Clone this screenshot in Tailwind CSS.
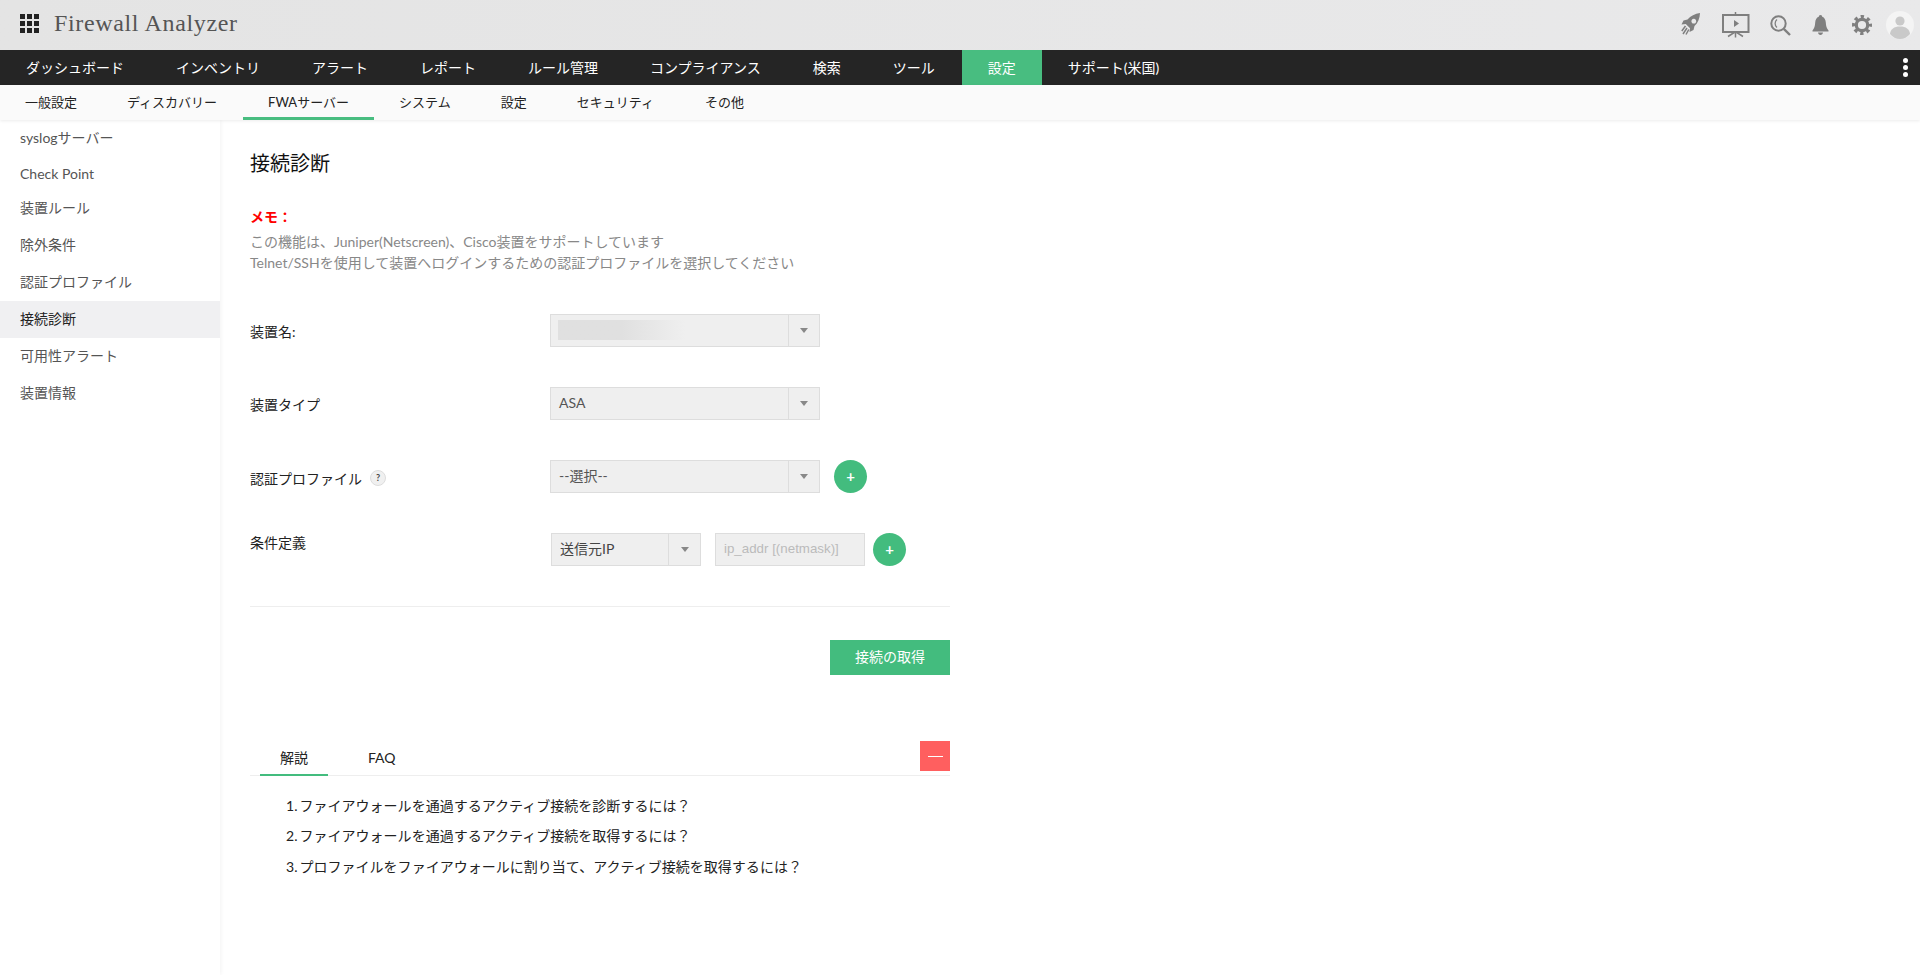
<!DOCTYPE html>
<html lang="ja">
<head>
    <meta charset="UTF-8">
    <meta name="viewport" content="width=device-width, initial-scale=1.0">
    <title>Firewall Analyzer</title>
    <script src="https://cdn.jsdelivr.net/npm/@tailwindcss/browser@4"></script>
</head>
<body class="h-[975px] overflow-hidden flex flex-col bg-white text-[14px] text-[#222] font-['Lato','Noto_Sans_CJK_JP',sans-serif]">

    <!-- Top header -->
    <header class="h-[50px] shrink-0 flex items-center bg-linear-to-r from-[#e4e4e4] to-[#e9e9ea]">
        <div class="ml-5 mb-[4px] grid grid-cols-3 gap-[2px]">
            <span class="w-[5px] h-[5px] bg-[#222]"></span><span class="w-[5px] h-[5px] bg-[#222]"></span><span class="w-[5px] h-[5px] bg-[#222]"></span>
            <span class="w-[5px] h-[5px] bg-[#222]"></span><span class="w-[5px] h-[5px] bg-[#222]"></span><span class="w-[5px] h-[5px] bg-[#222]"></span>
            <span class="w-[5px] h-[5px] bg-[#222]"></span><span class="w-[5px] h-[5px] bg-[#222]"></span><span class="w-[5px] h-[5px] bg-[#222]"></span>
        </div>
        <div class="ml-[15px] mb-[4px] text-[24px] tracking-[0.65px] text-[#555] font-['Liberation_Serif',serif]">Firewall Analyzer</div>

        <div class="ml-auto flex items-center">
            <!-- rocket -->
            <svg class="w-5 h-[22px] mb-[2px]" viewBox="0 0 20 22" fill="#7f7f7f">
                <path fill-rule="evenodd" d="M19 0C14 .8 9.5 2.8 6.5 6.5L2.5 7.5 .5 11.5 4.8 11 9 15.2 8.5 19 12.5 17 13.5 13C17 10 18.8 5 19 0ZM12.8 5.8a2.4 2.4 0 1 0 .01 0Z"/>
                <path d="M4.5 13L.8 18M6 15L2 21M7.8 16.5L5 21.5" stroke="#7f7f7f" stroke-width="1.5" fill="none"/>
            </svg>
            <!-- presentation -->
            <svg class="ml-[21px] w-[28px] h-[26px] mb-[1px]" viewBox="0 0 28 26" fill="none" stroke="#7f7f7f" stroke-width="2">
                <rect x="1" y="3" width="25.5" height="17"/>
                <path d="M13.5 0V3M13.5 20V25.5M13 20L6 24.5M14 20L21 24.5" stroke-width="1.5"/>
                <path d="M12 8L17 11.5 12 15Z" fill="#7f7f7f" stroke="none"/>
            </svg>
            <!-- search -->
            <svg class="ml-[20px] w-[21px] h-[21px]" viewBox="0 0 21 21" fill="none" stroke="#7f7f7f">
                <circle cx="8.5" cy="8.5" r="7.2" stroke-width="2"/>
                <path d="M13.8 13.8L20 20" stroke-width="2.4"/>
                <path d="M7 4.5C4.5 6.5 4.5 10.5 7 12.5" stroke-width="1.3"/>
            </svg>
            <!-- bell -->
            <svg class="ml-[21px] w-[17px] h-[20px]" viewBox="0 0 17 20" fill="#7f7f7f">
                <path d="M8.5 0C9.6 0 10.2 .8 10.2 1.8C12.6 2.6 13.6 4.8 13.8 7.5C14 11 14.6 13 16.5 15.5V16.5H.5V15.5C2.4 13 3 11 3.2 7.5C3.4 4.8 4.4 2.6 6.8 1.8C6.8 .8 7.4 0 8.5 0Z"/>
                <path d="M6 17.6H11C10.8 19 9.8 20 8.5 20S6.2 19 6 17.6Z"/>
            </svg>
            <!-- gear -->
            <svg class="ml-[23px] w-[20px] h-[20px]" viewBox="0 0 20 20" fill="none" stroke="#7f7f7f">
                <circle cx="10" cy="10" r="5.7" stroke-width="3.2"/>
                <circle cx="10" cy="10" r="8.3" stroke-width="3.4" stroke-dasharray="3.3 3.22" stroke-dashoffset="1.6"/>
            </svg>
            <!-- avatar -->
            <svg class="ml-[14px] mr-[6px] w-[28px] h-[28px]" viewBox="0 0 28 28">
                <circle cx="14" cy="14" r="14" fill="#f4f4f4"/>
                <circle cx="14" cy="10" r="4.6" fill="#c9c9c9"/>
                <path d="M4 23C4.5 18 8 15.5 14 15.5S23.5 18 24 23C21.5 26 18 28 14 28S6.5 26 4 23Z" fill="#c9c9c9"/>
            </svg>
        </div>
    </header>

    <!-- Main nav -->
    <nav class="h-[35px] shrink-0 flex bg-[#252525] text-white">
        <a class="px-[26px] leading-[36px]">ダッシュボード</a>
        <a class="px-[26px] leading-[36px]">インベントリ</a>
        <a class="px-[26px] leading-[36px]">アラート</a>
        <a class="px-[26px] leading-[36px]">レポート</a>
        <a class="px-[26px] leading-[36px]">ルール管理</a>
        <a class="px-[26px] leading-[36px]">コンプライアンス</a>
        <a class="px-[26px] leading-[36px]">検索</a>
        <a class="px-[26px] leading-[36px]">ツール</a>
        <a class="ml-px px-[26px] leading-[36px] bg-[#48bd80]">設定</a>
        <a class="px-[26px] leading-[36px]">サポート(米国)</a>
        <div class="ml-auto mr-[12px] flex flex-col justify-center gap-[2px]">
            <span class="w-[5px] h-[5px] rounded-full bg-white"></span>
            <span class="w-[5px] h-[5px] rounded-full bg-white"></span>
            <span class="w-[5px] h-[5px] rounded-full bg-white"></span>
        </div>
    </nav>

    <!-- Sub nav -->
    <nav class="h-[35px] shrink-0 flex bg-[#fafafa] text-[13px] text-[#222] relative z-10 shadow-[0_1px_3px_rgba(0,0,0,0.08)]">
        <a class="px-[25px] leading-[35px]">一般設定</a>
        <a class="px-[25px] leading-[35px]">ディスカバリー</a>
        <a class="ml-px px-[25px] leading-[35px] border-b-[3px] border-[#48bd80]">FWAサーバー</a>
        <a class="px-[25px] leading-[35px]">システム</a>
        <a class="px-[25px] leading-[35px]">設定</a>
        <a class="px-[25px] leading-[35px]">セキュリティ</a>
        <a class="ml-px px-[25px] leading-[35px]">その他</a>
    </nav>

    <div class="flex-1 flex min-h-0">
        <!-- Sidebar -->
        <aside class="w-[220px] shrink-0 text-[#555] shadow-[1px_0_4px_rgba(0,0,0,0.05)]">
            <a class="block h-[36px] pl-5 leading-[36px]">syslogサーバー</a>
            <a class="block h-[34px] pl-5 leading-[36px]">Check Point</a>
            <a class="block h-[37px] pl-5 leading-[35px]">装置ルール</a>
            <a class="block h-[37px] pl-5 leading-[35px]">除外条件</a>
            <a class="block h-[37px] pl-5 leading-[35px]">認証プロファイル</a>
            <a class="block h-[37px] pl-5 leading-[35px] bg-[#f0f0f2] text-[#222]">接続診断</a>
            <a class="block h-[37px] pl-5 leading-[35px]">可用性アラート</a>
            <a class="block h-[37px] pl-5 leading-[35px]">装置情報</a>
        </aside>

        <!-- Content -->
        <main class="ml-[30px] w-[700px]">
            <h1 class="mt-[29px] text-[20px] leading-[28px] text-[#111]">接続診断</h1>

            <div class="mt-[30px] text-[14px] leading-[20px] font-bold text-[#f00]">メモ：</div>
            <p class="mt-[4px] text-[#888] leading-[21px]">この機能は、Juniper(Netscreen)、Cisco装置をサポートしています<br>Telnet/SSHを使用して装置へログインするための認証プロファイルを選択してください</p>

            <!-- Form rows -->
            <div class="mt-[41px] flex items-center h-[33px]">
                <label class="w-[300px] pt-[2px]">装置名:</label>
                <div class="w-[270px] h-[33px] flex border border-[#ddd] bg-[#efefef]">
                    <div class="flex-1 pl-[7px] pt-[5px]"><div class="w-[127px] h-[20px] bg-linear-to-r from-[#e0e0e0] via-[#e0e0e0] to-[#efefef]"></div></div>
                    <div class="w-[31px] flex items-center justify-center border-l border-[#ddd]"><span class="w-0 h-0 border-x-[4px] border-x-transparent border-t-[5px] border-t-[#888]"></span></div>
                </div>
            </div>

            <div class="mt-[40px] flex items-center h-[33px]">
                <label class="w-[300px] pt-[1px]">装置タイプ</label>
                <div class="w-[270px] h-[33px] flex items-center border border-[#ddd] bg-[#efefef] text-[#555]">
                    <div class="flex-1 pl-[8px] pb-[3px]">ASA</div>
                    <div class="w-[31px] h-full flex items-center justify-center border-l border-[#ddd]"><span class="w-0 h-0 border-x-[4px] border-x-transparent border-t-[5px] border-t-[#888]"></span></div>
                </div>
            </div>

            <div class="mt-[40px] flex items-center h-[33px]">
                <label class="w-[300px] pt-[3px] flex items-center">認証プロファイル
                    <span class="ml-[8px] w-[16px] h-[16px] rounded-full bg-[#f0f0f0] border border-[#ddd] text-[9px] font-bold leading-[14px] text-center text-[#444]">?</span>
                </label>
                <div class="w-[270px] h-[33px] flex items-center border border-[#ddd] bg-[#efefef] text-[#555]">
                    <div class="flex-1 pl-[8px] pb-[3px]">--選択--</div>
                    <div class="w-[31px] h-full flex items-center justify-center border-l border-[#ddd]"><span class="w-0 h-0 border-x-[4px] border-x-transparent border-t-[5px] border-t-[#888]"></span></div>
                </div>
                <button class="ml-[14px] w-[33px] h-[33px] rounded-full bg-[#43bc7e] text-white font-bold text-[15px] leading-[33px]">+</button>
            </div>

            <div class="mt-[40px] flex items-start h-[33px]">
                <label class="w-[301px] leading-[20px]">条件定義</label>
                <div class="w-[150px] h-[33px] flex items-center border border-[#ddd] bg-[#efefef] text-[#444]">
                    <div class="flex-1 pl-[8px] pb-[2px]">送信元IP</div>
                    <div class="w-[32px] h-full flex items-center justify-center border-l border-[#ddd]"><span class="w-0 h-0 border-x-[4px] border-x-transparent border-t-[5px] border-t-[#888]"></span></div>
                </div>
                <div class="ml-[14px] w-[150px] h-[33px] border border-[#ddd] bg-[#efefef] pl-[8px] text-[13.33px] leading-[29px] text-[#bbb] font-['Liberation_Sans',sans-serif]">ip_addr [(netmask)]</div>
                <button class="ml-[8px] w-[33px] h-[33px] rounded-full bg-[#43bc7e] text-white font-bold text-[15px] leading-[33px]">+</button>
            </div>

            <div class="mt-[40px] border-t border-[#eee]"></div>

            <div class="mt-[33px] flex justify-end">
                <button class="w-[120px] h-[35px] pb-[2px] bg-[#43bc7e] text-white">接続の取得</button>
            </div>

            <!-- Help tabs -->
            <div class="mt-[66px] h-[35px] flex border-b border-[#eee] relative">
                <a class="ml-[10px] w-[68px] h-[35px] text-center leading-[33px] border-b-2 border-[#43bc7e] text-[#222]">解説</a>
                <a class="ml-[40px] leading-[33px] text-[#222]">FAQ</a>
                <button class="ml-auto w-[30px] h-[30px] bg-[#ff5f5f] flex items-center justify-center"><span class="w-[15px] h-[1px] bg-white"></span></button>
            </div>
            <ol class="mt-[14px] pl-[36px] tracking-[0.02px]">
                <li class="h-[31px] leading-[31px]">1.<span class="ml-[2px]">ファイアウォールを通過するアクティブ接続を診断するには？</span></li>
                <li class="h-[30px] leading-[30px]">2.<span class="ml-[2px]">ファイアウォールを通過するアクティブ接続を取得するには？</span></li>
                <li class="h-[31px] leading-[31px]">3.<span class="ml-[2px]">プロファイルをファイアウォールに割り当て、アクティブ接続を取得するには？</span></li>
            </ol>
        </main>
    </div>

</body>
</html>
